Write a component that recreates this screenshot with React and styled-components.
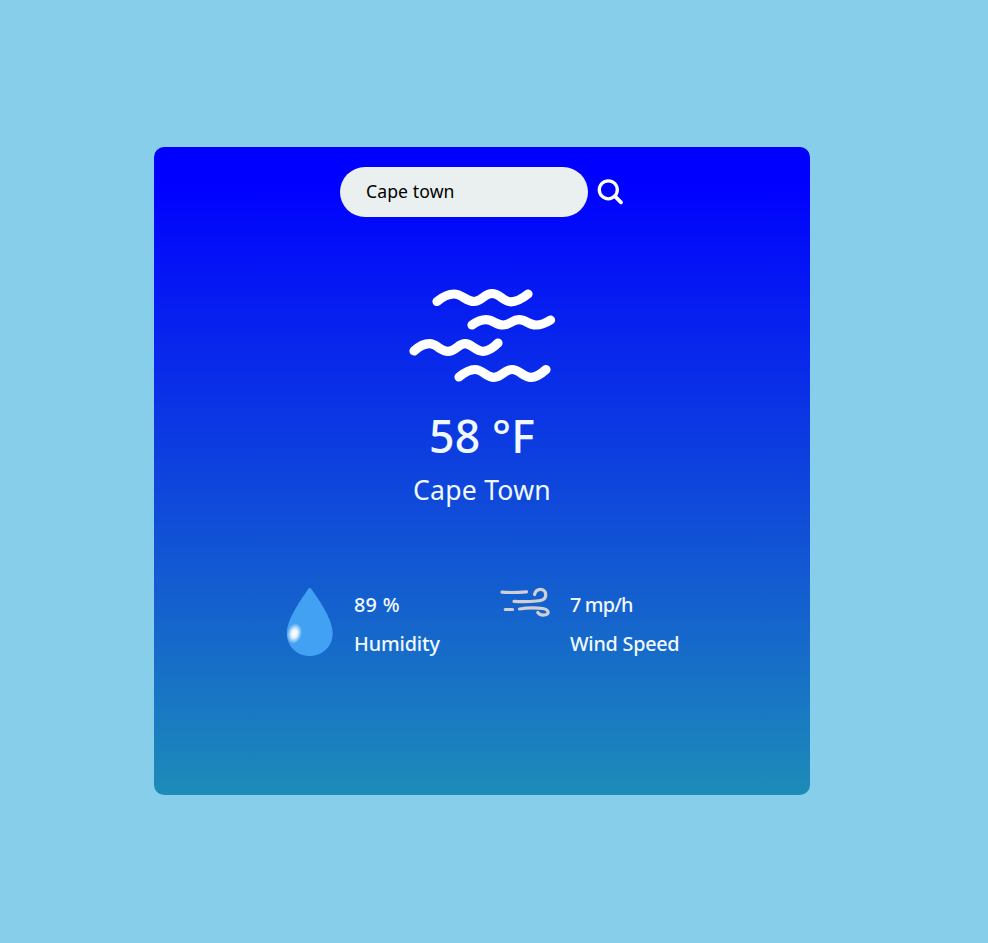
import React, { useState } from "react";
import styled, { createGlobalStyle } from "styled-components";

const GlobalStyle = createGlobalStyle`
  * { box-sizing: border-box; }
  body { margin: 0; background: #87ceeb; font-family: "Noto Sans", sans-serif; }
`;

const Page = styled.main`
  min-height: 943px;
  padding: 147px 0 0 154px;
`;

const Card = styled.section`
  width: 656px;
  height: 648px;
  padding-top: 20px;
  border-radius: 10px;
  background: linear-gradient(to bottom, #0000ff 5%, #1d8cb8 100%);
  color: #f0f8ff;
  display: flex;
  flex-direction: column;
  align-items: center;
`;

const SearchBar = styled.form`
  display: flex;
  align-items: center;
  gap: 8px;
  height: 50px;
`;

const SearchInput = styled.input`
  width: 248px;
  height: 50px;
  padding: 0 26px 2px;
  border: 0;
  outline: 0;
  border-radius: 25px;
  background: #eaefef;
  color: #000;
  font: 400 17.6px "Noto Sans", sans-serif;
  letter-spacing: 0.1px;
`;

const SearchButton = styled.button`
  display: flex;
  padding: 0;
  border: 0;
  background: none;
`;

const WeatherIcon = styled.svg`
  display: block;
  margin: 63px 0 0 2px;
  filter: blur(0.7px);
`;

const Temperature = styled.div`
  margin-top: 16px;
  font-size: 44.5px;
  font-weight: 500;
  line-height: 60px;
  letter-spacing: ${(p) => p.$tracking}px;
`;

const City = styled.div`
  margin-top: 4px;
  font-size: 26.6px;
  line-height: 40px;
  letter-spacing: ${(p) => p.$tracking}px;
`;

const Details = styled.div`
  align-self: flex-start;
  display: flex;
  margin: 77px 0 0 132px;
`;

const Detail = styled.div`
  display: flex;
  width: ${(p) => p.$width}px;
`;

const DetailIcon = styled.svg`
  flex: none;
  margin-right: ${(p) => p.$gap}px;
`;

const DetailText = styled.div`
  display: flex;
  flex-direction: column;
  gap: 9px;
  font-size: 19.8px;
  font-weight: 500;
  line-height: 30px;
  padding-top: 3px;
  white-space: nowrap;
`;

const DetailLine = styled.span`
  letter-spacing: ${(p) => p.$tracking}px;
`;

export default function App() {
  const [query, setQuery] = useState("Cape town");
  return (
    <>
      <GlobalStyle />
      <Page>
        <Card>
          <SearchBar onSubmit={(e) => e.preventDefault()}>
            <SearchInput value={query} onChange={(e) => setQuery(e.target.value)} />
            <SearchButton type="submit" aria-label="Search">
              <svg width="28" height="28" viewBox="0 0 28 28" fill="none" stroke="#fff" strokeLinecap="round">
                <circle cx="12.3" cy="11.8" r="9" strokeWidth="3.3" />
                <path d="M18.8 18.2 25 24.3" strokeWidth="3.8" />
              </svg>
            </SearchButton>
          </SearchBar>
          <WeatherIcon width="166" height="110" viewBox="0 0 166 110" fill="none" stroke="#fff" strokeWidth="9.2" strokeLinecap="round" strokeLinejoin="round">
            <path d="M37 21.5C43 16.5 49 14 54 14C62 14 66 21.5 74 21.5C82 21.5 84 13.5 92 13.5C100 13.5 103 21.8 111 21.8C117 21.8 123 18 128 14" />
            <path d="M72 45C77 41.5 81 39.7 86 39.7C93 39.7 96 45 103 45C110 45 112 39.7 119 39.7C126 39.7 129 45 136 45C141 45 146 43 150.5 40" />
            <path d="M14 71C19 66.5 24 63.7 29.5 63.7C37 63.7 40 71.3 48 71.3C56 71.3 58 63.7 65 63.7C72 63.7 75 71.3 83 71.3C88 71.3 93 68 98 63" />
            <path d="M59 97C65 92 70 89.5 75 89.5C83 89.5 86 97.3 94 97.3C102 97.3 104 89.5 112 89.5C120 89.5 123 97.3 131 97.3C136 97.3 141 94 146 89.5" />
          </WeatherIcon>
          <Temperature $tracking={0.2}>58 °F</Temperature>
          <City $tracking={0.25}>Cape Town</City>
          <Details>
            <Detail $width={214}>
              <DetailIcon $gap={20} width="48" height="70" viewBox="0 0 48 70">
                <defs>
                  <radialGradient id="shine">
                    <stop offset="0" stopColor="#fff" />
                    <stop offset="0.4" stopColor="#fff" stopOpacity="0.88" />
                    <stop offset="1" stopColor="#fff" stopOpacity="0" />
                  </radialGradient>
                </defs>
                <path d="M23.7 1C25 1 26 3 27 4.5C34 14 46.7 33 46.7 46C46.7 59.5 36.5 69 23.7 69C11 69 .8 59.5 .8 46C.8 33 14 14 20.5 4.5C21.5 3 22.5 1 23.7 1Z" fill="#42a1f3" />
                <ellipse cx="8.4" cy="46.5" rx="7.4" ry="10.5" fill="url(#shine)" transform="rotate(14 8.4 46.5)" />
              </DetailIcon>
              <DetailText>
                <DetailLine $tracking={0.3}>89 %</DetailLine>
                <DetailLine $tracking={-0.15}>Humidity</DetailLine>
              </DetailText>
            </Detail>
            <Detail $width={190}>
              <DetailIcon $gap={20} width="50" height="31" viewBox="0 0 50 31" fill="none" stroke="#cfd0d4" strokeWidth="3.2" strokeLinecap="round" strokeLinejoin="round">
                <path d="M2 5.2Q14 6 26.5 4.8" />
                <path d="M14 14.3Q26 15 36.5 14C43 13.8 46 11.5 45.7 7.5C45.3 1 36.5.5 34.5 7.5" />
                <path d="M5.3 22.5H12.5" />
                <path d="M19.5 22C28 20.5 37 20.8 43 21.5C49 22.5 50 27.5 44.5 28C41.5 28.3 39 27.5 37.8 25.5" />
              </DetailIcon>
              <DetailText>
                <DetailLine $tracking={-0.8}>7 mp/h</DetailLine>
                <DetailLine $tracking={-0.25}>Wind Speed</DetailLine>
              </DetailText>
            </Detail>
          </Details>
        </Card>
      </Page>
    </>
  );
}
